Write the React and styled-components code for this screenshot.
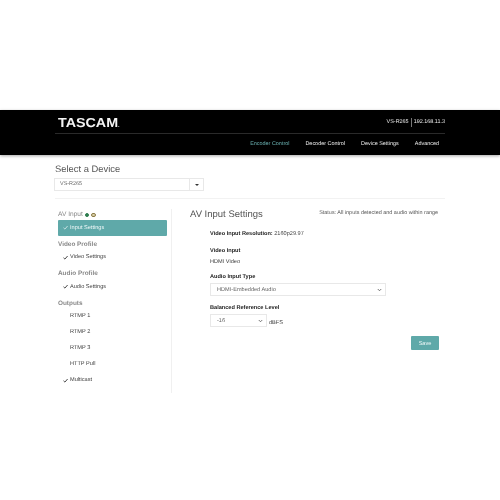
import React from 'react';
import styled, { createGlobalStyle } from 'styled-components';

const GlobalStyle = createGlobalStyle`
  html, body { margin: 0; padding: 0; background: #fff; }
  body {
    font-family: "Liberation Sans", Arial, sans-serif;
    color: #444;
    text-rendering: geometricPrecision;
  }
`;

const Page = styled.div`
  width: 500px;
  height: 500px;
  padding-top: 110px;
  box-sizing: border-box;
  overflow: hidden;
  filter: blur(0.2px);
`;

const Header = styled.header`
  height: 45px;
  background: #000;
  box-shadow: 0 1px 3px rgba(0, 0, 0, 0.35);
`;

const HeaderInner = styled.div`
  width: 390px;
  margin: 0 auto;
`;

const TopRow = styled.div`
  height: 23px;
  border-bottom: 1px solid #2a2a2a;
  display: flex;
  align-items: center;
  justify-content: space-between;
  padding: 0 0 0 3px;
`;

const Logo = styled.div`
  font-size: 13px;
  font-weight: 700;
  color: #f4f4f4;
  transform: scaleX(1.1);
  transform-origin: left center;
  padding-top: 2px;
  span { font-size: 5px; }
`;

const DeviceInfo = styled.div`
  display: flex;
  align-items: center;
  font-size: 5.45px;
  color: #f0f0f0;
  padding-top: 1px;
`;

const InfoName = styled.span`
  padding-right: 2px;
  border-right: 1px solid #777;
  line-height: 9px;
  margin-right: 2px;
`;

const Nav = styled.nav`
  height: 20px;
  display: flex;
  justify-content: flex-end;
  align-items: center;
  gap: 16px;
  padding-right: 6px;
`;

const NavLink = styled.a`
  font-size: 5.45px;
  color: ${p => (p.$active ? '#6bb3b3' : '#f0f0f0')};
`;

const Content = styled.main`
  width: 390px;
  margin: 0 auto;
  padding-top: 8px;
`;

const PageTitle = styled.h1`
  margin: 0;
  font-size: 9.4px;
  line-height: 12px;
  font-weight: 400;
  color: #555;
`;

const DeviceSelect = styled.div`
  margin: 3px 0 0 -1px;
  width: 150px;
  height: 13px;
  display: flex;
  border: 1px solid #e8e8e8;
  box-sizing: border-box;
  font-size: 5.45px;
  color: #666;
`;

const DeviceValue = styled.div`
  flex: 1;
  padding-left: 5px;
  line-height: 11px;
`;

const DeviceCaret = styled.div`
  width: 13px;
  border-left: 1px solid #e8e8e8;
  display: flex;
  align-items: center;
  justify-content: center;
  &::after {
    content: "";
    border: 2px solid transparent;
    border-top-color: #333;
    border-bottom: 0;
  }
`;

const Columns = styled.div`
  margin-top: 7px;
  border-top: 1px solid #f2f2f2;
  padding-top: 10px;
  display: flex;
`;

const Sidebar = styled.aside`
  width: 117px;
  min-height: 184px;
  padding: 0 4px 0 3px;
  border-right: 1px solid #f0f0f0;
  box-sizing: border-box;
  flex-shrink: 0;
`;

const GroupLabel = styled.div`
  display: flex;
  align-items: center;
  height: 8px;
  margin-top: ${p => (p.$first ? 2 : 5)}px;
  margin-bottom: 0.5px;
  font-size: ${p => (p.$first ? 6.6 : 6.4)}px;
  line-height: 8px;
  color: #888;
  font-weight: ${p => (p.$first ? 400 : 700)};
`;

const StatusDot = styled.i`
  width: 4.5px;
  height: 4.5px;
  border-radius: 50%;
  margin-left: ${p => p.$gap}px;
  box-sizing: border-box;
  background: ${p => p.$fill};
  border: 1.2px solid ${p => p.$ring};
`;

const MenuItem = styled.div`
  height: 16px;
  display: flex;
  align-items: center;
  padding-left: 5px;
  font-size: 5.6px;
  border-radius: 1px;
  color: ${p => (p.$active ? '#eef7f7' : '#444')};
  background: ${p => (p.$active ? '#5fa9a9' : 'transparent')};
  box-sizing: border-box;
`;

const CheckSlot = styled.span`
  width: 7px;
  flex-shrink: 0;
  svg { display: block; }
`;

const Panel = styled.section`
  flex: 1;
  padding: 0 6px 0 18px;
`;

const PanelHead = styled.div`
  display: flex;
  justify-content: space-between;
  align-items: flex-start;
  padding-right: 1px;
`;

const PanelTitle = styled.h2`
  margin: 0;
  font-size: 9.5px;
  line-height: 12px;
  font-weight: 400;
  color: #555;
`;

const Status = styled.div`
  font-size: 5.45px;
  line-height: 8px;
  color: #555;
`;

const Fields = styled.div`
  padding: 8.8px 0 0 20px;
`;

const Field = styled.div`
  font-size: 5.6px;
  line-height: 8px;
  color: #444;
  margin-bottom: ${p => p.$mb || 0}px;
`;

const Strong = styled.strong`
  font-weight: 700;
  color: #222;
`;

const Value = styled.div`
  margin-top: 2.5px;
`;

const SelectBox = styled.div`
  margin-top: 1.8px;
  width: ${p => p.$width}px;
  height: 13px;
  border: 1px solid #e8e8e8;
  box-sizing: border-box;
  display: flex;
  align-items: center;
  justify-content: space-between;
  padding: 0 3px 0 6px;
  color: #666;
  svg { display: block; }
`;

const Inline = styled.div`
  display: flex;
  align-items: flex-end;
  gap: 2px;
`;

const Actions = styled.div`
  display: flex;
  justify-content: flex-end;
  margin-top: 8.5px;
`;

const SaveButton = styled.button`
  width: 28px;
  height: 14px;
  padding: 0;
  border: 0;
  border-radius: 1px;
  background: #5fa9a9;
  color: #eef7f7;
  font: 5.6px "Liberation Sans", Arial, sans-serif;
`;

const Check = ({ color = '#333' }) => (
  <svg width="5" height="5" viewBox="0 0 10 10" fill="none" stroke={color} strokeWidth="1.8">
    <path d="M1 5.5 L3.8 8.2 L9.2 2" />
  </svg>
);

const Chevron = () => (
  <svg width="5" height="4" viewBox="0 0 10 8" fill="none" stroke="#555" strokeWidth="1.6">
    <path d="M1.5 2 L5 5.5 L8.5 2" />
  </svg>
);

const menu = [
  { label: 'Video Profile', items: [{ name: 'Video Settings', checked: true }] },
  { label: 'Audio Profile', items: [{ name: 'Audio Settings', checked: true }] },
  {
    label: 'Outputs',
    items: [
      { name: 'RTMP 1' },
      { name: 'RTMP 2' },
      { name: 'RTMP 3' },
      { name: 'HTTP Pull' },
      { name: 'Multicast', checked: true },
    ],
  },
];

export default function App() {
  return (
    <Page>
      <GlobalStyle />
      <Header>
        <HeaderInner>
          <TopRow>
            <Logo>TASCAM<span>.</span></Logo>
            <DeviceInfo>
              <InfoName>VS-R265</InfoName>
              192.168.11.3
            </DeviceInfo>
          </TopRow>
          <Nav>
            <NavLink $active>Encoder Control</NavLink>
            <NavLink>Decoder Control</NavLink>
            <NavLink>Device Settings</NavLink>
            <NavLink>Advanced</NavLink>
          </Nav>
        </HeaderInner>
      </Header>
      <Content>
        <PageTitle>Select a Device</PageTitle>
        <DeviceSelect>
          <DeviceValue>VS-R265</DeviceValue>
          <DeviceCaret />
        </DeviceSelect>
        <Columns>
          <Sidebar>
            <GroupLabel $first>
              AV Input
              <StatusDot $gap={2} $fill="#2e7d4f" $ring="#2e7d4f" />
              <StatusDot $gap={2} $fill="#d9cfa8" $ring="#8a7a45" />
            </GroupLabel>
            <MenuItem $active>
              <CheckSlot><Check color="#cfe6e6" /></CheckSlot>
              Input Settings
            </MenuItem>
            {menu.map(group => (
              <React.Fragment key={group.label}>
                <GroupLabel>{group.label}</GroupLabel>
                {group.items.map(item => (
                  <MenuItem key={item.name}>
                    <CheckSlot>{item.checked && <Check />}</CheckSlot>
                    {item.name}
                  </MenuItem>
                ))}
              </React.Fragment>
            ))}
          </Sidebar>
          <Panel>
            <PanelHead>
              <PanelTitle>AV Input Settings</PanelTitle>
              <Status>Status: All inputs detected and audio within range</Status>
            </PanelHead>
            <Fields>
              <Field $mb={9.5}><Strong>Video Input Resolution:</Strong> 2160p29.97</Field>
              <Field $mb={7.7}>
                <Strong>Video Input</Strong>
                <Value>HDMI Video</Value>
              </Field>
              <Field $mb={8}>
                <Strong>Audio Input Type</Strong>
                <SelectBox $width={176}>HDMI-Embedded Audio<Chevron /></SelectBox>
              </Field>
              <Field>
                <Strong>Balanced Reference Level</Strong>
                <Inline>
                  <SelectBox $width={57}>-16<Chevron /></SelectBox>
                  dBFS
                </Inline>
              </Field>
              <Actions><SaveButton>Save</SaveButton></Actions>
            </Fields>
          </Panel>
        </Columns>
      </Content>
    </Page>
  );
}
